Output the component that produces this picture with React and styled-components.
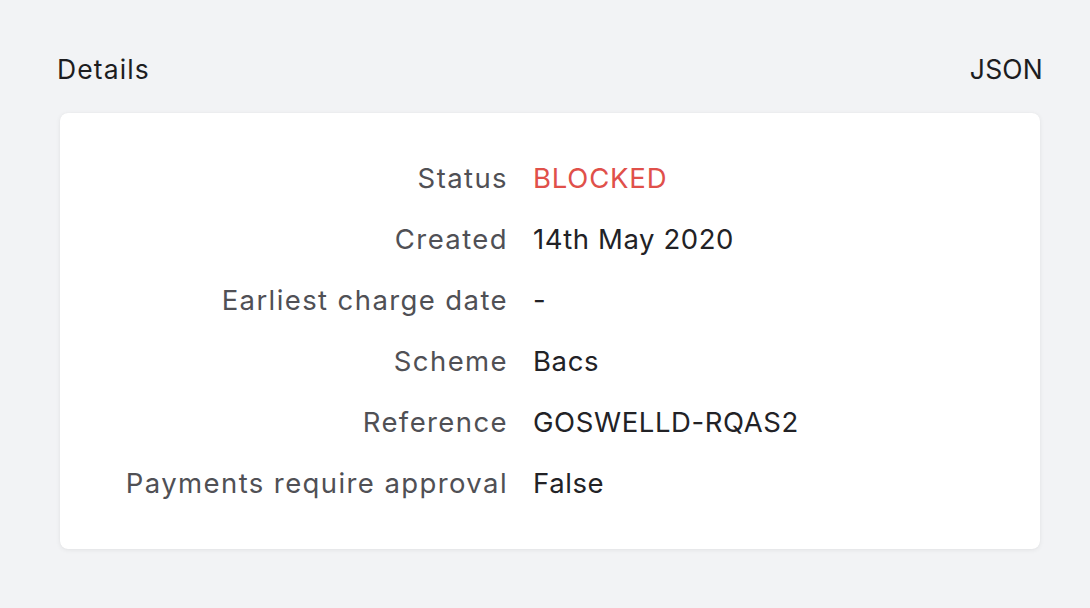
import React from "react";
import styled, { createGlobalStyle } from "styled-components";

const Global = createGlobalStyle`
  html, body { margin: 0; padding: 0; background: #f2f3f5; }
  body { font-family: Inter, "Noto Sans", sans-serif; -webkit-font-smoothing: antialiased; }
`;

const Page = styled.div`
  width: 1090px;
  height: 608px;
  box-sizing: border-box;
  padding: 54px 47px 0 57px;
  background: #f2f3f5;
`;

const Header = styled.div`
  display: flex;
  justify-content: space-between;
  align-items: baseline;
  font-size: 26.5px;
  line-height: 31px;
  color: #1d1d1f;
  letter-spacing: 1.1px;
  margin-bottom: 28px;
`;

const HeaderLink = styled.span`
  letter-spacing: 0.2px;
`;

const Card = styled.div`
  margin-left: 3px;
  margin-right: 3px;
  background: #fff;
  border-radius: 8px;
  box-shadow: 0 1px 5px rgba(0, 0, 0, 0.07), 0 0 1px rgba(0, 0, 0, 0.06);
  padding: 49px 0 49px 0;
`;

const Grid = styled.dl`
  margin: 0;
  display: grid;
  grid-template-columns: 448px 1fr;
  column-gap: 25px;
  row-gap: 28px;
  font-size: 27.5px;
  line-height: 33px;
  letter-spacing: 1.4px;
`;

const Label = styled.dt`
  margin: 0;
  text-align: right;
  color: #505055;
`;

const Value = styled.dd`
  margin: 0;
  color: ${(p) => (p.$tone === "danger" ? "#e0504a" : "#222226")};
  letter-spacing: ${(p) => (p.$tone === "danger" ? "0.8px" : "0.6px")};
`;

const rows = [
  ["Status", "BLOCKED", "danger"],
  ["Created", "14th May 2020"],
  ["Earliest charge date", "-"],
  ["Scheme", "Bacs"],
  ["Reference", "GOSWELLD-RQAS2"],
  ["Payments require approval", "False"],
];

export default function App() {
  return (
    <Page>
      <Global />
      <Header>
        <span>Details</span>
        <HeaderLink>JSON</HeaderLink>
      </Header>
      <Card>
        <Grid>
          {rows.map(([k, v, tone]) => (
            <React.Fragment key={k}>
              <Label>{k}</Label>
              <Value $tone={tone}>{v}</Value>
            </React.Fragment>
          ))}
        </Grid>
      </Card>
    </Page>
  );
}
